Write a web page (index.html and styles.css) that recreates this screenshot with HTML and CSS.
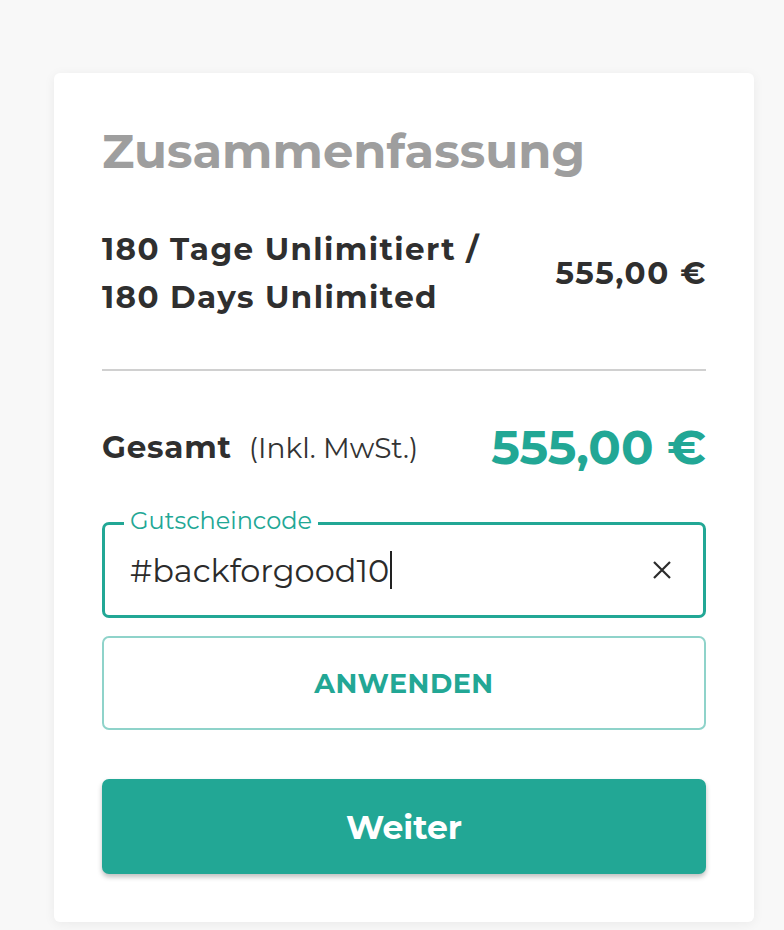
FILE: index.html
```html
<!DOCTYPE html>
<html lang="de">
<head>
<meta charset="utf-8">
<title>Zusammenfassung</title>
<link rel="stylesheet" href="styles.css">
</head>
<body>
<div class="page">
  <section class="card">
    <h2 class="title">Zusammenfassung</h2>
    <div class="item">
      <div class="item-name">180 Tage Unlimitiert /<br>180 Days Unlimited</div>
      <div class="item-price">555,00 €</div>
    </div>
    <hr class="divider">
    <div class="total">
      <div class="total-label"><span class="total-strong">Gesamt</span><span class="total-note">(Inkl. MwSt.)</span></div>
      <div class="total-price">555,00 €</div>
    </div>
    <div class="field">
      <span class="field-label">Gutscheincode</span>
      <div class="field-value"><span class="field-text">#backforgood10</span><span class="caret"></span></div>
      <svg class="clear" width="20" height="20" viewBox="0 0 20 20"><path d="M2 2 L18 18 M18 2 L2 18" stroke="#2b2b2b" stroke-width="2.2" fill="none"/></svg>
    </div>
    <button class="btn-outline">ANWENDEN</button>
    <button class="btn-primary">Weiter</button>
  </section>
</div>
</body>
</html>
```
FILE: styles.css
```css
* { box-sizing: border-box; }
html, body { margin: 0; padding: 0; }
body {
  background: #f8f8f8;
  font-family: "Montserrat", "DejaVu Sans", sans-serif;
  color: #2f2f2f;
  width: 784px;
  height: 930px;
  overflow: hidden;
}
.page {
  padding: 73px 0 0 54px;
}
.card {
  width: 700px;
  background: #fff;
  border-radius: 6px;
  box-shadow: 0 2px 12px rgba(0,0,0,0.06);
  padding: 50px 48px 48px;
  display: flex;
  flex-direction: column;
}
.title {
  margin: 0;
  font-size: 48px;
  line-height: 56px;
  font-weight: 700;
  color: #9e9e9e;
}
.item {
  margin-top: 46px;
  display: flex;
  justify-content: space-between;
  align-items: center;
}
.item-name {
  font-size: 31px;
  line-height: 48px;
  font-weight: 700;
  letter-spacing: 1.4px;
}
.item-price {
  font-size: 31px;
  font-weight: 700;
  letter-spacing: 1.6px;
  margin-right: -1px;
}
.divider {
  margin: 48px 0 0;
  border: 0;
  height: 2px;
  background: #d0d0d0;
}
.total {
  margin-top: 48px;
  height: 56px;
  display: flex;
  justify-content: space-between;
  align-items: center;
}
.total-label { display: flex; align-items: baseline; gap: 17px; }
.total-strong { font-size: 31px; font-weight: 700; letter-spacing: 0.8px; }
.total-note { font-size: 28px; font-weight: 400; color: #333; }
.total-price {
  font-size: 48px;
  font-weight: 700;
  color: #22a795;
}
.field {
  position: relative;
  margin-top: 47px;
  height: 96px;
  border: 3px solid #22a795;
  border-radius: 7px;
  display: flex;
  align-items: center;
  padding: 0 31px 0 25px;
}
.field-label {
  position: absolute;
  top: -18px;
  left: 19px;
  padding: 0 6px;
  background: #fff;
  color: #22a795;
  font-size: 24px;
  line-height: 28px;
  font-weight: 400;
}
.field-value { flex: 1; display: flex; align-items: center; }
.field-text { font-size: 32px; color: #2b2b2b; }
.caret { width: 2px; height: 38px; background: #222; margin-left: 1px; }
.clear { flex: none; }
.btn-outline {
  margin-top: 18px;
  height: 94px;
  width: 100%;
  background: #fff;
  border: 2px solid #8fd3ca;
  border-radius: 7px;
  color: #22a795;
  font-family: inherit;
  font-size: 27px;
  font-weight: 700;
  letter-spacing: 0.5px;
}
.btn-primary {
  margin-top: 49px;
  height: 95px;
  width: 100%;
  background: #22a795;
  border: 0;
  border-radius: 7px;
  box-shadow: 0 3px 5px rgba(0,0,0,0.25);
  color: #fff;
  font-family: inherit;
  font-size: 33px;
  font-weight: 700;
}
```
